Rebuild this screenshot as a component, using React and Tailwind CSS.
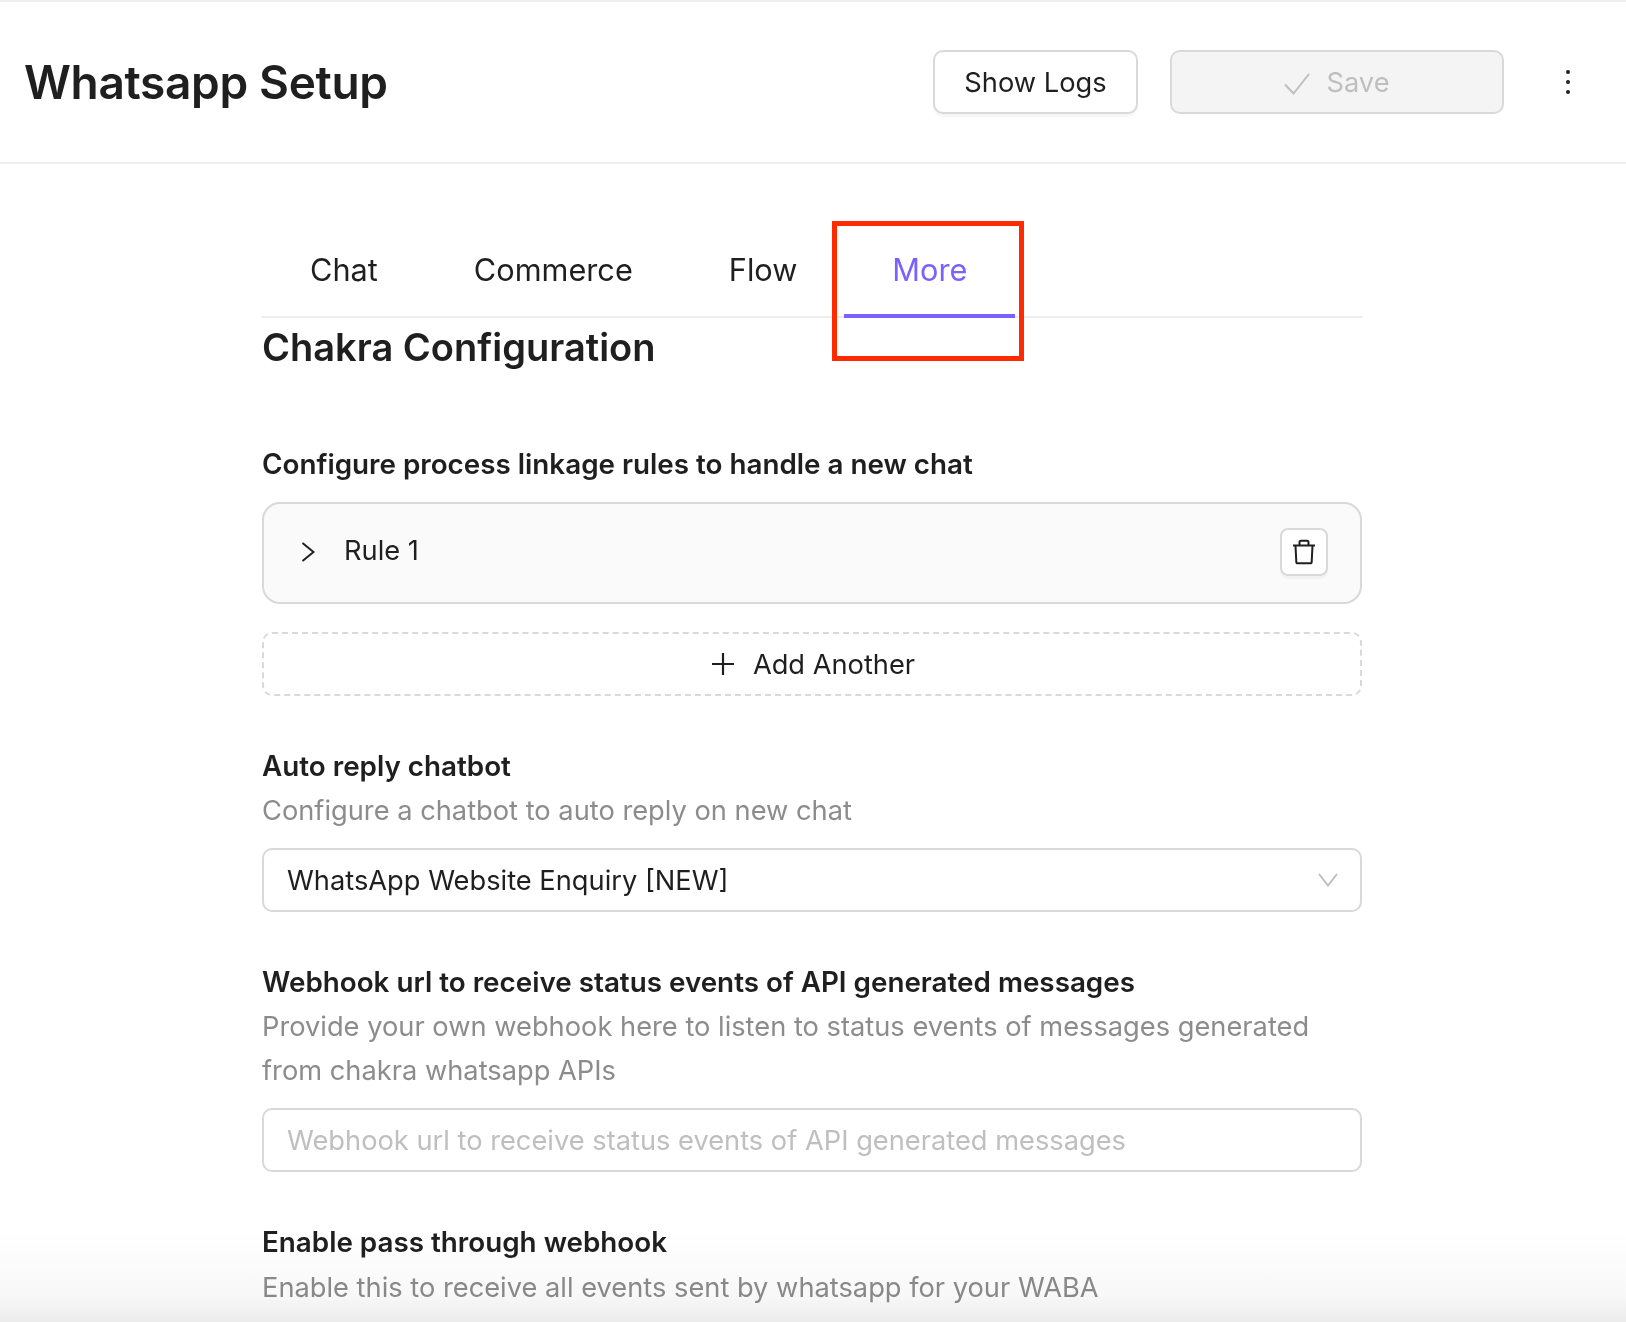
import React from 'react';

const tabs = ['Chat', 'Commerce', 'Flow', 'More'];

// Trash can drawn by hand, the lid handle is squarer than the icon packages
const TrashIcon = () => (
  <svg width="24" height="26" viewBox="0 0 24 26" fill="none" stroke="#1f1f1f" strokeWidth="2" strokeLinejoin="round">
    <path d="M1 6.5h22" />
    <path d="M7.5 6.5V3.2c0-.9.6-1.5 1.5-1.5h6c.9 0 1.5.6 1.5 1.5v3.3" />
    <path d="M3.5 6.5l.8 16.2c0 1 .7 1.6 1.6 1.6h12.2c.9 0 1.6-.6 1.6-1.6l.8-16.2" />
  </svg>
);

const CheckIcon = () => (
  <svg width="26" height="22" viewBox="0 0 26 22" fill="none" stroke="#bfbfbf" strokeWidth="2">
    <path d="M1 11.5l8.5 9L25 1" />
  </svg>
);

const ChevronRightIcon = () => (
  <svg width="14" height="20" viewBox="0 0 14 20" fill="none" stroke="#1f1f1f" strokeWidth="2">
    <path d="M1.5 1l11 9-11 9" />
  </svg>
);

const ChevronDownIcon = () => (
  <svg width="20" height="14" viewBox="0 0 20 14" fill="none" stroke="#bfbfbf" strokeWidth="2">
    <path d="M1 1l9 11.5L19 1" />
  </svg>
);

const PlusIcon = () => (
  <svg width="24" height="24" viewBox="0 0 24 24" fill="none" stroke="#1f1f1f" strokeWidth="2.2">
    <path d="M1 12h22M12 1v22" />
  </svg>
);

const Label = ({ children }) => (
  <div className="text-[27.8px] leading-[44.5px] font-semibold text-[#1f1f1f]">{children}</div>
);

const Hint = ({ children }) => (
  <div className="pt-[1px] text-[27.25px] leading-[44px] text-[#8c8c8c]">{children}</div>
);

const App = () => {
  return (
    <div className="relative h-[1322px] overflow-hidden bg-white font-['Inter',sans-serif] text-[#1f1f1f]">
      {/* Top bar */}
      <header className="flex h-[164px] items-center justify-between border-y-2 border-[#eeeeee] pl-[24px] pr-[56px]">
        <h1 className="text-[46px] font-semibold leading-none tracking-[-0.33px]">Whatsapp Setup</h1>
        <div className="flex items-center">
          <button className="h-[64px] w-[205px] rounded-[10px] border-2 border-[#d9d9d9] bg-white pt-[3px] text-[27.25px] shadow-[0_3px_1px_rgba(0,0,0,0.03)]">
            Show Logs
          </button>
          <button className="ml-[32px] flex h-[64px] w-[334px] items-center justify-center gap-[16px] rounded-[10px] border-2 border-[#d9d9d9] bg-[#f4f4f4] pt-[3px] text-[27.25px] text-[#bfbfbf]">
            <CheckIcon />
            Save
          </button>
          <div className="ml-[62px] flex flex-col gap-[6px]">
            <span className="h-[4px] w-[4px] rounded-full bg-[#1f1f1f]" />
            <span className="h-[4px] w-[4px] rounded-full bg-[#1f1f1f]" />
            <span className="h-[4px] w-[4px] rounded-full bg-[#1f1f1f]" />
          </div>
        </div>
      </header>

      <main className="ml-[262px] w-[1100px]">
        {/* Tabs */}
        <nav className="mt-[56px] flex h-[98px] border-b-2 border-[#eeeeee]">
          {tabs.map((tab) => (
            <div
              key={tab}
              className={`flex h-[98px] items-center border-b-4 px-[48px] pt-[6px] text-[30.7px] ${
                tab === 'More' ? '-ml-[1px] border-[#7b61ff] text-[#7b61ff]' : 'border-transparent'
              }`}
            >
              {tab}
            </div>
          ))}
        </nav>

        <h2 className="mt-[4px] text-[38px] font-semibold leading-[50px]">Chakra Configuration</h2>

        <div className="mt-[70px]">
          <Label>Configure process linkage rules to handle a new chat</Label>
          <div className="mt-[15px] flex h-[102px] items-center justify-between rounded-[18px] border-2 border-[#d9d9d9] bg-[#fafafa] pb-[2px] pl-[37px] pr-[32px]">
            <div className="flex items-center gap-[29px] text-[27.25px]">
              <ChevronRightIcon />
              Rule 1
            </div>
            <button className="flex h-[48px] w-[48px] items-center justify-center rounded-[8px] border-2 border-[#d9d9d9] bg-white shadow-[0_3px_1px_rgba(0,0,0,0.03)]">
              <TrashIcon />
            </button>
          </div>
          <button className="mt-[28px] flex h-[64px] w-full items-center justify-center gap-[18px] rounded-[10px] border-2 border-dashed border-[#d9d9d9] pl-[2px] text-[27.25px]">
            <PlusIcon />
            <span className="pt-[4px]">Add Another</span>
          </button>
        </div>

        <div className="mt-[48px]">
          <Label>Auto reply chatbot</Label>
          <Hint>Configure a chatbot to auto reply on new chat</Hint>
          <div className="mt-[14.5px] flex h-[64px] items-center justify-between rounded-[10px] border-2 border-[#d9d9d9] pl-[23px] pr-[22px] text-[27.25px]">
            <span className="pt-[4px]">WhatsApp Website Enquiry [NEW]</span>
            <ChevronDownIcon />
          </div>
        </div>

        <div className="mt-[48px]">
          <Label>Webhook url to receive status events of API generated messages</Label>
          <Hint>Provide your own webhook here to listen to status events of messages generated from chakra whatsapp APIs</Hint>
          <div className="mt-[15px] flex h-[64px] items-center rounded-[10px] border-2 border-[#d9d9d9] pl-[23px] pt-[2px] text-[27.25px] text-[#bfbfbf]">
            Webhook url to receive status events of API generated messages
          </div>
        </div>

        <div className="mt-[48px]">
          <Label>Enable pass through webhook</Label>
          <Hint>Enable this to receive all events sent by whatsapp for your WABA</Hint>
        </div>
      </main>

      {/* Bottom fade over the page */}
      <div className="absolute bottom-0 left-0 h-[90px] w-full bg-gradient-to-b from-white via-[#f8f8f8] via-70% to-[#ececec] mix-blend-multiply" />

      {/* Red highlight box around the active tab */}
      <div className="absolute left-[832px] top-[221px] h-[140px] w-[192px] border-[5px] border-[#ff2a00]" />
    </div>
  );
};

export default App;
